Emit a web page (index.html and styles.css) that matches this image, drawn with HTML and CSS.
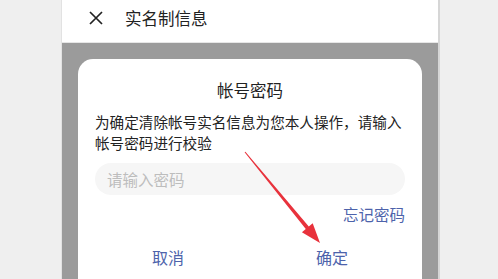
FILE: index.html
```html
<!DOCTYPE html>
<html>
<head>
    <title>实名制信息</title>
    <link rel="stylesheet" href="styles.css">
</head>
<body>
    <div class="gutter left"></div>
    <div class="phone">
        <div class="header">
            <svg class="close" width="14" height="14" viewBox="0 0 14 14">
                <path d="M1 1 L13 13 M13 1 L1 13" stroke="#222" stroke-width="1.7" fill="none"/>
            </svg>
            <span class="header-title">实名制信息</span>
        </div>
        <div class="overlay">
            <div class="dialog">
                <h2 class="dialog-title">帐号密码</h2>
                <p class="dialog-text">为确定清除帐号实名信息为您本人操作，请输入帐号密码进行校验</p>
                <input type="password" class="input-field" placeholder="请输入密码">
                <div class="forgot">忘记密码</div>
                <div class="button-row">
                    <button class="button">取消</button>
                    <button class="button">确定</button>
                </div>
            </div>
        </div>
    </div>
    <div class="gutter right"></div>

    <!-- flecha roja encima del dialogo -->
    <svg class="arrow" width="498" height="279" viewBox="0 0 498 279">
        <polygon points="245.4,151.7 308.8,226.4 312.7,223.2 320,243 301.9,232.2 305.8,229 244.6,152.3" fill="#e8323c"/>
    </svg>
</body>
</html>
```

FILE: styles.css
```css
body {
    margin: 0;
    height: 279px;
    overflow: hidden;
    display: flex;
    font-family: "Noto Sans CJK SC", sans-serif;
    color: #222;
    background-color: #efefef;
}
.gutter {
    background-color: #efefef;
}
.gutter.left {
    width: 61px;
    border-right: 1px solid #e2e2e2;
}
.gutter.right {
    flex: 1;
    border-left: 2px solid #d6d6d6;
}
.phone {
    width: 376px;
    display: flex;
    flex-direction: column;
}
.header {
    height: 42px;
    background-color: #fff;
    border-bottom: 1px solid #e6e6e6;
    display: flex;
    align-items: center;
    padding-left: 27px;
    box-sizing: content-box;
}
.close {
    margin-top: -6px;
}
.header-title {
    font-size: 16.5px;
    margin-left: 22px;
    margin-top: -6px;
}
.overlay {
    flex: 1;
    background-color: #9b9b9b;
    padding: 16px 16px 0 16px;
    overflow: hidden;
}
.dialog {
    background-color: #fff;
    border-radius: 15px 15px 0 0;
    padding: 20px 17px 0 17px;
    height: 300px;
}
.dialog-title {
    margin: 0;
    font-size: 16.5px;
    font-weight: normal;
    line-height: 22px;
    text-align: center;
}
.dialog-text {
    margin: 10px 0 0 0;
    font-size: 14.6px;
    line-height: 21px;
}
.input-field {
    display: block;
    width: 100%;
    box-sizing: border-box;
    height: 32px;
    margin-top: 10px;
    padding: 0 12px;
    border: none;
    border-radius: 16px;
    background-color: #f6f6f6;
    font-family: inherit;
    font-size: 15.5px;
    outline: none;
}
.input-field::placeholder {
    color: #bdbdbd;
}
.forgot {
    margin-top: 9px;
    text-align: right;
    font-size: 15.5px;
    line-height: 20px;
    color: #4d63ab;
}
.button-row {
    display: flex;
    margin: 11px -9px 0 -9px;
}
.button {
    flex: 1;
    height: 44px;
    border: none;
    background: none;
    font-family: inherit;
    font-size: 16px;
    color: #4d63ab;
}
.arrow {
    position: absolute;
    left: 0;
    top: 0;
    pointer-events: none;
}
```
